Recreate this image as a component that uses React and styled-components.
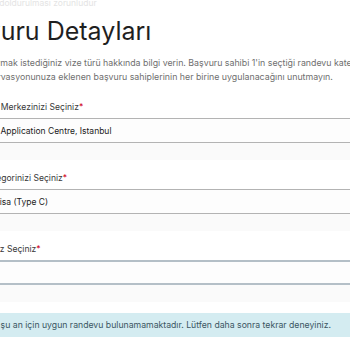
import React from "react";
import styled, { createGlobalStyle } from "styled-components";

const GlobalStyle = createGlobalStyle`
  html, body {
    margin: 0;
    padding: 0;
    background: #ffffff;
    overflow: hidden;
  }
  body {
    font-family: Inter, "Noto Sans", sans-serif;
  }
`;

// the screenshot is a crop of a wider page, so the page starts left of the frame
const Page = styled.div`
  width: 600px;
  margin-left: -57px;
`;

const Note = styled.div`
  margin-top: -3px;
  font-size: 8.5px;
  line-height: 12px;
  color: #e4e4e4;
`;

const Title = styled.h1`
  font-size: 25px;
  font-weight: 400;
  color: #1f1f1f;
  line-height: 30px;
  margin: 7px 0 0;
`;

const Lead = styled.p`
  font-size: 8.8px;
  line-height: 14px;
  color: #6f6f6f;
  margin: 10px 0 0;
`;

const Form = styled.div`
  margin-top: 16px;
  padding-left: 2px;
  display: flex;
  flex-direction: column;
`;

const Field = styled.div`
  display: flex;
  flex-direction: column;
  margin-bottom: 11px;
`;

const Label = styled.label`
  font-size: 8.6px;
  line-height: 14px;
  color: #383838;
  margin-bottom: 4px;
`;

const Req = styled.span`
  color: #d0021b;
`;

const Input = styled.div`
  height: ${(p) => (p.$active ? "21px" : "23px")};
  display: flex;
  align-items: center;
  padding-left: 6px;
  font-size: 8.5px;
  color: #222;
  background: #fdfdfd;
  border-top: ${(p) => (p.$active ? "2px solid #b4bfc7" : "1px solid #b3b3b3")};
  border-bottom: ${(p) => (p.$active ? "2px solid #b4bfc7" : "1px solid #b3b3b3")};
`;

const Hint = styled.div`
  height: 17px;
  background: #fafafa;
`;

const Alert = styled.div`
  margin-top: 0;
  background: #d4ecf1;
  color: #3b5662;
  font-size: 8.7px;
  line-height: 14px;
  padding: 5px 16px;
`;

export default function App() {
  return (
    <>
      <GlobalStyle />
      <Page>
        <Note>Tüm alanların doldurulması zorunludur</Note>
        <Title>Başvuru Detayları</Title>
        <Lead>
          Lütfen başvurmak istediğiniz vize türü hakkında bilgi verin. Başvuru sahibi 1'in seçtiği randevu kategorisinin
          <br />
          ve diğer rezervasyonunuza eklenen başvuru sahiplerinin her birine uygulanacağını unutmayın.
        </Lead>
        <Form>
          <Field>
            <Label>
              Vize Başvuru Merkezinizi Seçiniz<Req>*</Req>
            </Label>
            <Input>Poland Visa Application Centre, Istanbul</Input>
            <Hint />
          </Field>
          <Field>
            <Label>
              Randevu Kategorinizi Seçiniz<Req>*</Req>
            </Label>
            <Input>Schengen Visa (Type C)</Input>
            <Hint />
          </Field>
          <Field>
            <Label>
              Alt Kategoriniz Seçiniz<Req>*</Req>
            </Label>
            <Input $active />
            <Hint />
          </Field>
        </Form>
        <Alert>
          Üzgünüz, şu an için uygun randevu bulunamamaktadır. Lütfen daha sonra tekrar deneyiniz.
        </Alert>
      </Page>
    </>
  );
}
